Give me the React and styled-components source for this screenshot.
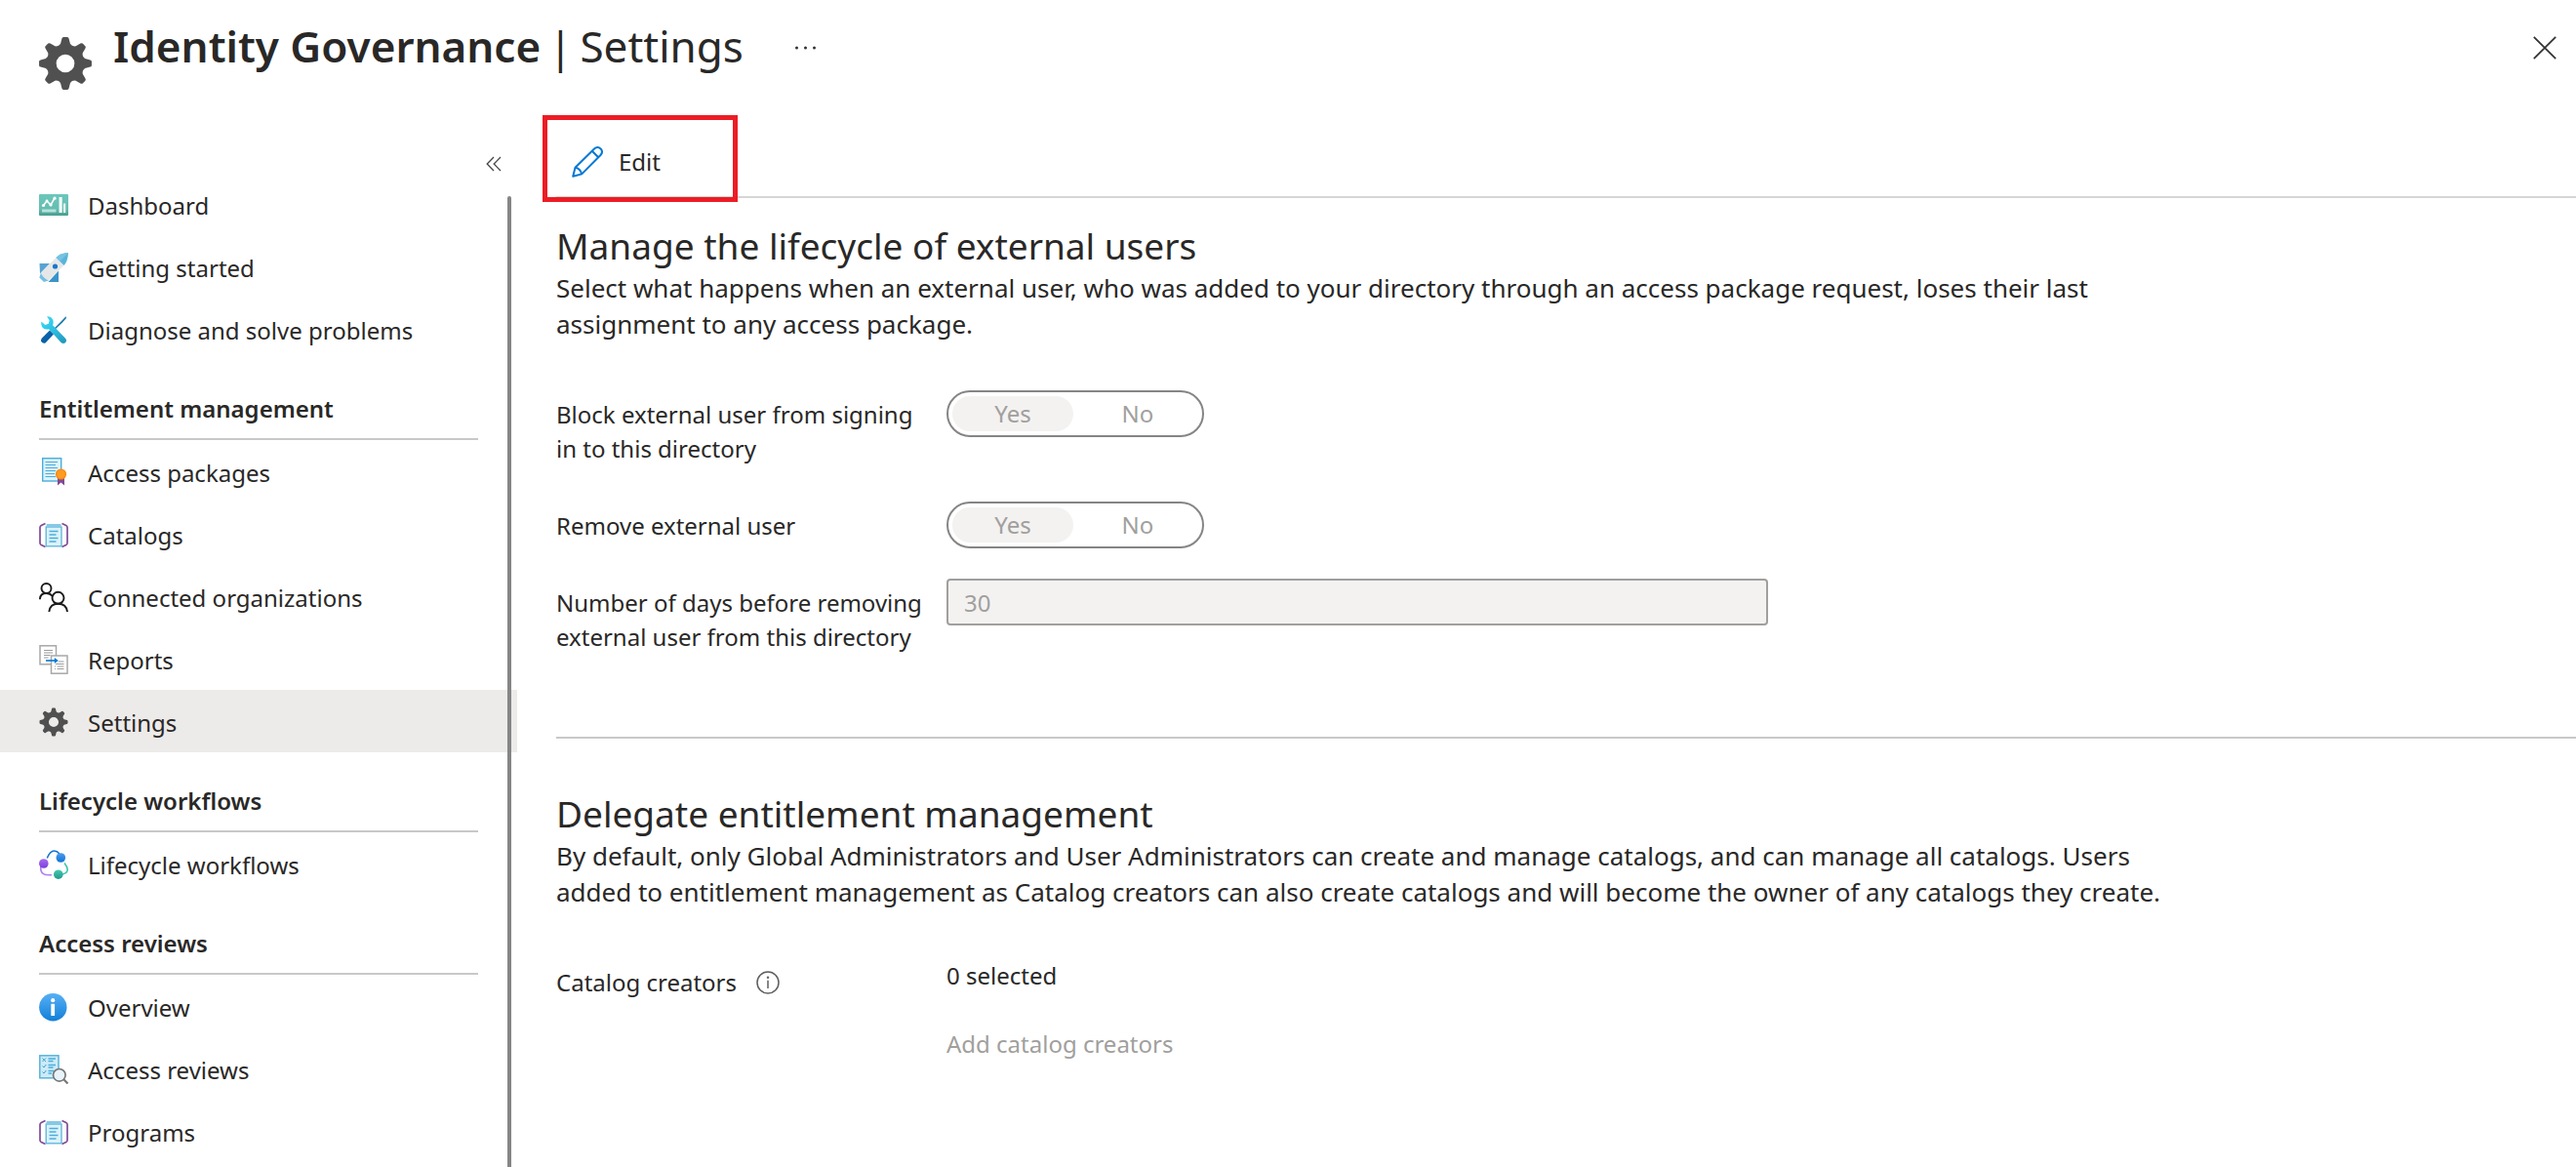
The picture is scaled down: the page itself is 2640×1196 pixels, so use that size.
import React from "react";
import styled, { createGlobalStyle } from "styled-components";

const GlobalStyle = createGlobalStyle`
  *, *::before, *::after { box-sizing: border-box; }
  body {
    margin: 0;
    background: #ffffff;
    color: #292827;
    font-family: "Noto Sans", "Open Sans", sans-serif;
    font-size: 24px;
    line-height: 35px;
  }
  h1, h2, h3, p, ul { margin: 0; padding: 0; }
  ul { list-style: none; }
  button, input { font: inherit; color: inherit; }
`;

/* ---------- layout ---------- */

const Page = styled.div`
  display: flex;
  flex-direction: column;
  min-height: 100vh;
`;

const Header = styled.header`
  display: flex;
  align-items: flex-start;
  gap: 22px;
  height: 118px;
  padding: 17px 8px 0 40px;

  > svg { margin-top: 21px; }
`;

const Title = styled.h1`
  display: flex;
  gap: 8px;
  font-size: 44px;
  line-height: 60px;
  font-weight: 400;
  white-space: nowrap;

  strong { font-weight: 600; }
`;

const IconButton = styled.button`
  display: flex;
  align-items: center;
  justify-content: center;
  width: ${(p) => p.$size}px;
  height: ${(p) => p.$size}px;
  padding: 0;
  border: 0;
  background: none;
  color: #323130;
  cursor: pointer;
`;

const HeaderActions = styled.div`
  display: flex;
  flex: 1;
  align-items: center;
  justify-content: space-between;
  height: 64px;
  padding-left: 18px;
`;

const Body = styled.div`
  display: flex;
  flex: 1;
`;

/* ---------- sidebar ---------- */

const Sidebar = styled.aside`
  display: flex;
  flex-direction: column;
  flex: none;
  width: 530px;
`;

const SidebarTop = styled.div`
  display: flex;
  align-items: flex-end;
  justify-content: flex-end;
  height: 59px;
  padding: 0 16px 1px;
`;

const Nav = styled.nav`
  position: relative;
  flex: 1;
`;

const ScrollThumb = styled.div`
  position: absolute;
  top: 24px;
  right: 6px;
  bottom: 0;
  width: 4px;
  border-radius: 2px 2px 0 0;
  background: #858585;
`;

const NavHeading = styled.h3`
  margin: 0 40px;
  padding: 32px 0 12px;
  border-bottom: 2px solid #c8c8c8;
  font-size: 24px;
  line-height: 36px;
  font-weight: 600;
`;

const NavLink = styled.a`
  display: flex;
  align-items: center;
  gap: 20px;
  height: 64px;
  padding: 2px 40px 0;
  background: ${(p) => (p.$selected ? "#edebe9" : "transparent")};
  color: inherit;
  text-decoration: none;
`;

/* ---------- main ---------- */

const Main = styled.main`
  flex: 1;
  min-width: 0;
  padding-left: 40px;
`;

const Toolbar = styled.div`
  display: flex;
  height: 85px;
  padding-top: 12px;
  border-bottom: 2px solid #d6d6d6;
`;

const ToolbarButton = styled.button`
  position: relative;
  display: flex;
  align-items: center;
  gap: 16px;
  padding: 0 16px;
  border: 0;
  background: none;
  cursor: pointer;
`;

const Callout = styled.span`
  position: absolute;
  top: -12px;
  left: -14px;
  width: 200px;
  height: 89px;
  border: 5px solid #ed1c24;
  pointer-events: none;
`;

const Section = styled.section`
  padding: ${(p) => (p.$divided ? "52px 0 79px" : "24px 0 79px")};
  border-top: ${(p) => (p.$divided ? "2px solid #c8c8c8" : "0")};
`;

const SectionTitle = styled.h2`
  font-size: 37px;
  line-height: 50px;
  font-weight: 400;
`;

const Description = styled.p`
  max-width: 1680px;
  font-size: 26px;
  line-height: 37px;
`;

const Form = styled.div`
  display: grid;
  grid-template-columns: 400px minmax(0, 842px);
  row-gap: 31px;
  align-items: start;
  margin-top: 49px;
`;

const FieldLabel = styled.label`
  display: flex;
  align-items: center;
  gap: 20px;
  padding: 7px 14px 6px 0;
`;

const Toggle = styled.div`
  display: flex;
  gap: 4px;
  width: 264px;
  height: 48px;
  padding: 4px;
  border: 2px solid #858585;
  border-radius: 24px;
`;

const ToggleOption = styled.label`
  flex: 1;
  border-radius: 18px;
  background: ${(p) => (p.$on ? "#f3f2f1" : "transparent")};
  color: #a19f9d;
  line-height: 36px;
  text-align: center;

  input {
    position: absolute;
    margin: 0;
    opacity: 0;
  }
`;

const TextBox = styled.input`
  width: 100%;
  height: 48px;
  padding: 0 16px;
  border: 2px solid #a19f9d;
  border-radius: 4px;
  background: #f3f2f1;
  color: #a19f9d;
`;

const Values = styled.div`
  display: flex;
  flex-direction: column;
  align-items: flex-start;
  gap: 35px;
`;

const AddButton = styled.button`
  padding: 0;
  border: 0;
  background: none;
  color: #a19f9d;
`;

/* ---------- icons ---------- */

const gearPath = (() => {
  const pt = (r, deg) => {
    const a = (deg * Math.PI) / 180;
    return `${(30 + r * Math.sin(a)).toFixed(2)} ${(30 - r * Math.cos(a)).toFixed(2)}`;
  };
  let d = "";
  for (let i = 0; i < 8; i += 1) {
    const a = i * 45;
    d += `${i ? "L" : "M"}${pt(23, a - 14)} L${pt(28.5, a - 8)} Q${pt(30, a - 7)} ${pt(30, a - 4)} L${pt(30, a + 4)} Q${pt(30, a + 7)} ${pt(28.5, a + 8)} L${pt(23, a + 14)} Q${pt(20.5, a + 22.5)} ${pt(23, a + 31)} `;
  }
  return `${d}Z M30 19.600a10.400 10.400 0 1 0 0 20.800a10.400 10.400 0 1 0 0-20.800Z`;
})();

const GearIcon = ({ size, inset = 0 }) => (
  <svg width={size} height={size} viewBox={`${-inset} ${-inset} ${60 + inset * 2} ${60 + inset * 2}`} aria-hidden="true">
    <path d={gearPath} fill="#505050" fillRule="evenodd" />
  </svg>
);

const Icon30 = ({ children }) => (
  <svg width="30" height="30" viewBox="0 0 30 30" fill="none" aria-hidden="true">
    {children}
  </svg>
);

const DashboardIcon = () => (
  <Icon30>
    <defs>
      <linearGradient id="dash" x1="0" y1="4" x2="0" y2="26" gradientUnits="userSpaceOnUse">
        <stop offset="0" stopColor="#6bc7bb" />
        <stop offset="0.7" stopColor="#66bdb1" />
        <stop offset="1" stopColor="#479b8d" />
      </linearGradient>
    </defs>
    <rect y="4" width="30" height="22" rx="1" fill="url(#dash)" />
    <path d="M4.500 15.500 8 11l4 4 4-7" stroke="#fff" strokeWidth="1.600" />
    <circle cx="4.500" cy="15.500" r="1.600" fill="#fff" />
    <circle cx="8" cy="11" r="1.400" fill="#fff" />
    <circle cx="12" cy="15" r="1.600" fill="#fff" />
    <circle cx="16" cy="8.200" r="1.600" fill="#fff" />
    <rect x="3" y="19.500" width="14.500" height="3" fill="#b5e2dc" />
    <rect x="20.500" y="7" width="3.200" height="16" fill="#f2fbf9" />
    <rect x="25" y="13.500" width="2.200" height="9.500" fill="#f2fbf9" />
  </Icon30>
);

const RocketIcon = () => (
  <Icon30>
    <path d="M.5 11H11L1 21.500Z" fill="#57a3d1" />
    <path d="M20 18.500V30H9.500Z" fill="#3a94c9" />
    <path d="M2 20.500.3 25.500 5 30l5-1.500Z" fill="#76bfe4" />
    <path d="M17.500 5 25.500 13 9.500 28.500Q4 26 1.800 20.500Z" fill="#e6e7e8" />
    <path d="M17.500 5Q21.500.5 30 0 29.500 9 25.500 13Z" fill="#5ab4d9" />
    <path d="M17.500 5Q21.500.5 30 0L21.500 9Z" fill="#74c3e2" />
    <circle cx="16.500" cy="14" r="2.600" fill="#1b77c9" />
  </Icon30>
);

const ToolsIcon = () => (
  <Icon30>
    <defs>
      <linearGradient id="wrench" x1="4" y1="2" x2="27" y2="28" gradientUnits="userSpaceOnUse">
        <stop offset="0" stopColor="#38dbf7" />
        <stop offset="0.6" stopColor="#2bb8dd" />
        <stop offset="1" stopColor="#2197b8" />
      </linearGradient>
    </defs>
    <path d="M27.500 1.300 28 3 24 7.600 15.500 15.500 14.500 14.500 23 6Z" fill="#1678a8" />
    <path d="M11 15.500 15 19.500 6.500 28.600Q3.500 29.500 2 26.500 1.800 25 3 23.500Z" fill="#0a62a8" />
    <path d="M8 1.200Q13 1 14.500 5.500 15 8 14 10.300L27 23.800Q29 26 27 28.300 24.800 30 22.500 28L10 14.300Q5.500 15.500 3 12 1.800 9.500 2.300 6.500L6.300 10 9.800 8.800 10.600 5.200Z" fill="url(#wrench)" />
  </Icon30>
);

const PackageIcon = () => (
  <Icon30>
    <rect x="3.700" y=".7" width="19" height="23.300" fill="#dcf2fa" stroke="#4aaedb" strokeWidth="1.400" />
    <path d="M6.500 4.500H19M6.500 7.500H17M6.500 10.500H19M6.500 13.500H17M6.500 16.500H16M6.500 19.500H17" stroke="#4aaedb" strokeWidth="1.200" />
    <path d="M19 20H26V28.500L22.500 25.500 19 28.500Z" fill="#804998" />
    <circle cx="22.500" cy="17" r="5.600" fill="#fb8a0a" />
    <circle cx="22.500" cy="17" r="4.200" fill="#ff9a24" />
  </Icon30>
);

const CatalogIcon = () => (
  <Icon30>
    <path d="M6.500 3.500 2.300 5.500Q1 6.200 1 7.500V23.500Q1 24.800 2.300 25.500L6.500 27.500M23.500 3.500 27.700 5.500Q29 6.200 29 7.500V23.500Q29 24.800 27.700 25.500L23.500 27.500" stroke="#804998" strokeWidth="1.700" />
    <rect x="7.200" y="7" width="15.800" height="19.800" fill="#dcf2fa" stroke="#5ab4d9" strokeWidth="1.300" />
    <rect x="7.500" y="4" width="15.200" height="3.400" rx="1" fill="#86c8e6" />
    <path d="M10.500 11.500H19.500M10.500 15H17.500M10.500 18.500H19.500M10.500 22H17.500" stroke="#4aaedb" strokeWidth="1.300" />
  </Icon30>
);

const PeopleIcon = () => (
  <Icon30>
    <g stroke="#1b1a19" strokeWidth="1.900">
      <circle cx="7.500" cy="6" r="5" />
      <circle cx="19.500" cy="15.800" r="6" />
      <path d="M.9 17.200Q1.200 11 7.500 11 11.500 11 13.700 14M10.300 30Q11.300 21.800 19.500 21.800 28 21.800 29 30" />
    </g>
  </Icon30>
);

const ReportsIcon = () => (
  <Icon30>
    <rect x="1" y=".8" width="16.500" height="19" fill="#fff" stroke="#a8a8a8" strokeWidth="1.500" />
    <path d="M5 5.500H14M5 8H14M5 10.500H11.500M5 13H9.500" stroke="#9a9a9a" strokeWidth="1.100" />
    <rect x="12.500" y="11" width="16.500" height="18.200" fill="#fff" stroke="#a8a8a8" strokeWidth="1.500" />
    <path d="M20 17H25.500M17 19.500H25.500M16 22H17M18.500 22H25.500M16 24.500H17M18.500 24.500H25.500" stroke="#9a9a9a" strokeWidth="1.100" />
    <path d="M7 16H18" stroke="#0078d4" strokeWidth="1.600" />
    <path d="M15.800 13 19.800 16 15.800 19Z" fill="#0078d4" />
  </Icon30>
);

const WorkflowIcon = () => (
  <Icon30>
    <defs>
      <linearGradient id="wfBlue" x1="0" y1="0" x2="0" y2="1"><stop stopColor="#4f9bea" /><stop offset="1" stopColor="#0f74d6" /></linearGradient>
      <linearGradient id="wfPurple" x1="0" y1="0" x2="0" y2="1"><stop stopColor="#a56cf0" /><stop offset="1" stopColor="#7a3ddb" /></linearGradient>
      <linearGradient id="wfGreen" x1="0" y1="0" x2="0" y2="1"><stop stopColor="#42cbb2" /><stop offset="1" stopColor="#22988a" /></linearGradient>
    </defs>
    <path d="M8.300 8.500Q11.300 1 15.500 1 18.500 1 21 4" stroke="#0f74d6" strokeWidth="1.600" />
    <path d="M26 13.500Q29.300 17.500 29.200 20.500 28.800 24.500 22 25.300" stroke="#3fc4ad" strokeWidth="1.600" />
    <path d="M1.800 17Q1.200 22.500 4.500 24.700 6.500 26 13 25.700" stroke="#b07df3" strokeWidth="1.600" />
    <circle cx="22.300" cy="8" r="4.800" fill="url(#wfBlue)" />
    <circle cx="4.800" cy="14" r="4.800" fill="url(#wfPurple)" />
    <circle cx="19.800" cy="25.200" r="4.800" fill="url(#wfGreen)" />
  </Icon30>
);

const OverviewIcon = () => (
  <Icon30>
    <defs>
      <linearGradient id="info" x1="0" y1="0" x2="0" y2="1"><stop stopColor="#57b0f5" /><stop offset="1" stopColor="#127fd8" /></linearGradient>
    </defs>
    <circle cx="14.300" cy="15.200" r="14.200" fill="url(#info)" />
    <circle cx="14.200" cy="8.200" r="2.100" fill="#fff" />
    <rect x="12.300" y="11.800" width="3.800" height="12.200" rx=".6" fill="#fff" />
  </Icon30>
);

const ReviewIcon = () => (
  <Icon30>
    <rect x=".8" y=".8" width="19.200" height="23" fill="#cdebf7" stroke="#5ab4d9" strokeWidth="1.500" />
    <path d="M3.500 3.500 7 7M7 3.500 3.500 7M3.500 11.500 5 13 7.300 10M3.500 17.500 5 19 7.300 16" stroke="#3f9fd0" strokeWidth="1" />
    <path d="M9.500 4H17M9.500 6.500H14.500M9.500 10.500H17M9.500 13H14.500M9.500 16.500H15M9.500 19H13" stroke="#4aaedb" strokeWidth="1.300" />
    <circle cx="20.800" cy="20.800" r="6.300" fill="#e8f4f9" stroke="#767676" strokeWidth="1.700" />
    <path d="M25.300 25.300 29.500 29.500" stroke="#767676" strokeWidth="2.200" />
  </Icon30>
);

const PencilIcon = () => (
  <svg width="32" height="32" viewBox="0 0 32 32" fill="none" stroke="#0078d4" strokeWidth="2" strokeLinejoin="round" aria-hidden="true">
    <path d="M1.200 30.800 3.500 21.800 23.300 2.300Q26.500-.3 29.600 2.400 32.300 5.500 29.700 8.700L10.200 28.400Z" />
    <path d="M20.800 4.800 27.200 11.200M3.500 21.800Q8.500 22.500 10.200 28.400" />
  </svg>
);

const CollapseIcon = () => (
  <svg width="16" height="16" viewBox="0 0 16 16" fill="none" stroke="#484644" strokeWidth="1.300" aria-hidden="true">
    <path d="M8 1 1.200 8 8 15M15 1 8.200 8 15 15" />
  </svg>
);

const MoreIcon = () => (
  <svg width="24" height="4" viewBox="0 0 24 4" fill="#323130" aria-hidden="true">
    <circle cx="2.500" cy="2" r="1.500" />
    <circle cx="11.500" cy="2" r="1.500" />
    <circle cx="20.500" cy="2" r="1.500" />
  </svg>
);

const CloseIcon = () => (
  <svg width="24" height="24" viewBox="0 0 24 24" fill="none" stroke="#323130" strokeWidth="1.700" aria-hidden="true">
    <path d="M.8.800 23.200 23.200M23.200.800.8 23.200" />
  </svg>
);

const HintIcon = () => (
  <svg width="24" height="24" viewBox="0 0 24 24" fill="none" stroke="#605e5c" strokeWidth="1.500" aria-hidden="true">
    <circle cx="12" cy="12" r="11" />
    <path d="M12 9.800V18" />
    <circle cx="12" cy="6.800" r=".5" />
  </svg>
);

/* ---------- content ---------- */

const navGroups = [
  {
    items: [
      ["Dashboard", DashboardIcon],
      ["Getting started", RocketIcon],
      ["Diagnose and solve problems", ToolsIcon],
    ],
  },
  {
    heading: "Entitlement management",
    items: [
      ["Access packages", PackageIcon],
      ["Catalogs", CatalogIcon],
      ["Connected organizations", PeopleIcon],
      ["Reports", ReportsIcon],
      ["Settings", () => <GearIcon size={30} inset={1} />, true],
    ],
  },
  { heading: "Lifecycle workflows", items: [["Lifecycle workflows", WorkflowIcon]] },
  {
    heading: "Access reviews",
    items: [
      ["Overview", OverviewIcon],
      ["Access reviews", ReviewIcon],
      ["Programs", CatalogIcon],
    ],
  },
];

function YesNo({ name, labelId }) {
  return (
    <Toggle role="radiogroup" aria-labelledby={labelId}>
      <ToggleOption $on>
        <input type="radio" name={name} value="yes" defaultChecked disabled />
        Yes
      </ToggleOption>
      <ToggleOption>
        <input type="radio" name={name} value="no" disabled />
        No
      </ToggleOption>
    </Toggle>
  );
}

export default function App() {
  return (
    <Page>
      <GlobalStyle />
      <Header>
        <GearIcon size={54} />
        <Title>
          <strong>Identity Governance</strong>
          <span>|</span>
          <span>Settings</span>
        </Title>
        <HeaderActions>
          <IconButton $size={48} aria-label="More actions">
            <MoreIcon />
          </IconButton>
          <IconButton $size={48} aria-label="Close">
            <CloseIcon />
          </IconButton>
        </HeaderActions>
      </Header>

      <Body>
        <Sidebar>
          <SidebarTop>
            <IconButton $size={16} aria-label="Collapse menu">
              <CollapseIcon />
            </IconButton>
          </SidebarTop>
          <Nav>
            {navGroups.map((group) => (
              <React.Fragment key={group.heading || "general"}>
                {group.heading && <NavHeading>{group.heading}</NavHeading>}
                <ul>
                  {group.items.map(([text, ItemIcon, selected]) => (
                    <li key={text}>
                      <NavLink href="#" $selected={selected} aria-current={selected ? "page" : undefined}>
                        <ItemIcon />
                        <span>{text}</span>
                      </NavLink>
                    </li>
                  ))}
                </ul>
              </React.Fragment>
            ))}
            <ScrollThumb />
          </Nav>
        </Sidebar>

        <Main>
          <Toolbar>
            <ToolbarButton>
              <PencilIcon />
              Edit
              <Callout />
            </ToolbarButton>
          </Toolbar>

          <Section>
            <SectionTitle>Manage the lifecycle of external users</SectionTitle>
            <Description>
              Select what happens when an external user, who was added to your directory through an access package
              request, loses their last assignment to any access package.
            </Description>
            <Form>
              <FieldLabel as="span" id="block-label">Block external user from signing in to this directory</FieldLabel>
              <YesNo name="block" labelId="block-label" />
              <FieldLabel as="span" id="remove-label">Remove external user</FieldLabel>
              <YesNo name="remove" labelId="remove-label" />
              <FieldLabel htmlFor="days">Number of days before removing external user from this directory</FieldLabel>
              <TextBox id="days" type="text" defaultValue="30" disabled />
            </Form>
          </Section>

          <Section $divided>
            <SectionTitle>Delegate entitlement management</SectionTitle>
            <Description>
              By default, only Global Administrators and User Administrators can create and manage catalogs, and can
              manage all catalogs. Users added to entitlement management as Catalog creators can also create catalogs
              and will become the owner of any catalogs they create.
            </Description>
            <Form>
              <FieldLabel as="span">
                Catalog creators
                <HintIcon />
              </FieldLabel>
              <Values>
                <span>0 selected</span>
                <AddButton type="button" disabled>Add catalog creators</AddButton>
              </Values>
            </Form>
          </Section>
        </Main>
      </Body>
    </Page>
  );
}
